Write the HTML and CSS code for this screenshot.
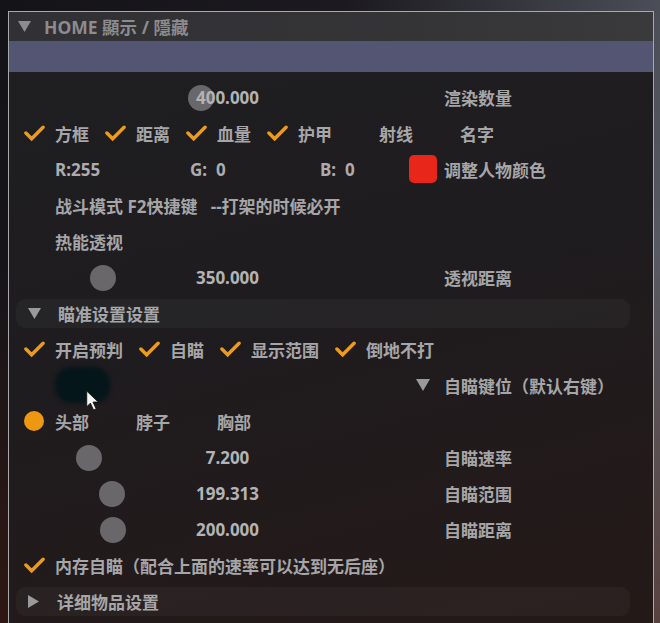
FILE: index.html
```html
<!DOCTYPE html>
<html lang="zh-CN">
<head>
    <meta charset="UTF-8">
    <meta name="viewport" content="width=device-width, initial-scale=1.0">
    <title>HOME 顯示 / 隱藏</title>
    <link rel="stylesheet" href="styles.css">
</head>
<body>
    <div class="panel">
        <div class="titlebar">
            <svg class="tri tri-title" viewBox="0 0 12 10"><polygon points="0,0 12,0 6,10"/></svg>
            <span>HOME 顯示 / 隱藏</span>
        </div>
        <div class="accent"></div>

        <div class="content">
            <div class="row slider-row">
                <div class="slider"><span class="knob" style="left: 133px"></span><span class="value">400.000</span></div>
                <span class="label">渲染数量</span>
            </div>

            <div class="row options">
                <div class="opt"><svg class="check" viewBox="0 0 22 18"><polyline points="2,9 8,15 20,3"/></svg><span>方框</span></div>
                <div class="opt"><svg class="check" viewBox="0 0 22 18"><polyline points="2,9 8,15 20,3"/></svg><span>距离</span></div>
                <div class="opt"><svg class="check" viewBox="0 0 22 18"><polyline points="2,9 8,15 20,3"/></svg><span>血量</span></div>
                <div class="opt"><svg class="check" viewBox="0 0 22 18"><polyline points="2,9 8,15 20,3"/></svg><span>护甲</span></div>
                <div class="opt"><i class="slot"></i><span>射线</span></div>
                <div class="opt"><i class="slot"></i><span>名字</span></div>
            </div>

            <div class="row rgb">
                <span class="num">R:255</span>
                <span class="num">G:&nbsp; 0</span>
                <span class="num">B:&nbsp; 0</span>
                <span class="swatch"></span>
                <span class="label">调整人物颜色</span>
            </div>

            <div class="row text-row">战斗模式 F2快捷键&nbsp;&nbsp; --打架的时候必开</div>
            <div class="row text-row">热能透视</div>

            <div class="row slider-row">
                <div class="slider"><span class="knob" style="left: 35px"></span><span class="value">350.000</span></div>
                <span class="label">透视距离</span>
            </div>

            <div class="row section">
                <div class="section-bar">
                    <svg class="tri" viewBox="0 0 12 10"><polygon points="0,0 12,0 6,10"/></svg>
                    <span>瞄准设置设置</span>
                </div>
            </div>

            <div class="row options">
                <div class="opt"><svg class="check" viewBox="0 0 22 18"><polyline points="2,9 8,15 20,3"/></svg><span>开启预判</span></div>
                <div class="opt"><svg class="check" viewBox="0 0 22 18"><polyline points="2,9 8,15 20,3"/></svg><span>自瞄</span></div>
                <div class="opt"><svg class="check" viewBox="0 0 22 18"><polyline points="2,9 8,15 20,3"/></svg><span>显示范围</span></div>
                <div class="opt"><svg class="check" viewBox="0 0 22 18"><polyline points="2,9 8,15 20,3"/></svg><span>倒地不打</span></div>
            </div>

            <div class="row key-row">
                <div class="key-color"><span class="blob"></span></div>
                <svg class="tri tri-key" viewBox="0 0 14 12"><polygon points="0,0 14,0 7,12"/></svg>
                <span class="label">自瞄键位（默认右键）</span>
                <svg class="cursor" viewBox="0 0 13 20"><path d="M1 1 L1 16 L4.5 12.5 L7.5 19 L10 18 L7 11.5 L12 11.5 Z"/></svg>
            </div>

            <div class="row options">
                <div class="opt"><i class="radio"></i><span>头部</span></div>
                <div class="opt"><i class="slot"></i><span>脖子</span></div>
                <div class="opt"><i class="slot"></i><span>胸部</span></div>
            </div>

            <div class="row slider-row">
                <div class="slider"><span class="knob" style="left: 21px"></span><span class="value">7.200</span></div>
                <span class="label">自瞄速率</span>
            </div>
            <div class="row slider-row">
                <div class="slider"><span class="knob" style="left: 44px"></span><span class="value">199.313</span></div>
                <span class="label">自瞄范围</span>
            </div>
            <div class="row slider-row">
                <div class="slider"><span class="knob" style="left: 45px"></span><span class="value">200.000</span></div>
                <span class="label">自瞄距离</span>
            </div>

            <div class="row options">
                <div class="opt"><svg class="check" viewBox="0 0 22 18"><polyline points="2,9 8,15 20,3"/></svg><span>内存自瞄（配合上面的速率可以达到无后座）</span></div>
            </div>

            <div class="row section">
                <div class="section-bar">
                    <svg class="tri tri-right" viewBox="0 0 11 13"><polygon points="0,0 11,6.5 0,13"/></svg>
                    <span>详细物品设置</span>
                </div>
            </div>
        </div>
    </div>
</body>
</html>
```

FILE: styles.css
```css
html, body {
    height: 100%;
}
body {
    margin: 0;
    overflow: hidden;
    font-family: "Noto Sans", "Noto Sans CJK SC", sans-serif;
    font-weight: 700;
    font-size: 17px;
    color: #a6a6a8;
    background:
        linear-gradient(180deg, rgba(0, 0, 0, 0) 40%, rgba(70, 25, 10, 0.5) 100%),
        linear-gradient(100deg, #141318 0%, #1c1a20 45%, #4a4d56 85%, #6a6c74 100%);
}
.panel {
    margin: 11px 0 0 8px;
    width: 644px;
    height: 620px;
    border: 1px solid #a9a9ad;
    border-bottom: none;
    overflow: hidden;
    background: linear-gradient(165deg, #1f1e21 0%, #1e1c1f 45%, #221a1b 75%, #241917 100%);
}
.titlebar {
    height: 29px;
    display: flex;
    align-items: center;
    gap: 13px;
    padding-left: 9px;
    background: linear-gradient(90deg, #313034 0%, #343336 60%, #3a3a3d 100%);
    color: #8c8c8e;
    font-size: 17.5px;
}
.accent {
    height: 31px;
    background: #545573;
}
.content {
    padding: 7px 0 0 7px;
}
.row {
    position: relative;
    height: 36px;
    display: flex;
    align-items: center;
    padding-left: 8px;
}
.tri {
    fill: #9a9a9c;
    width: 13px;
    height: 11px;
    flex: none;
}
.tri-title {
    fill: #8c8c8e;
}

/* sliders */
.slider-row {
    padding-left: 39px;
}
.slider {
    position: relative;
    width: 345px;
    height: 36px;
    display: flex;
    align-items: center;
    justify-content: center;
}
.knob {
    position: absolute;
    top: 6px;
    width: 26px;
    height: 26px;
    border-radius: 50%;
    background: #69676a;
}
.value {
    position: relative;
    color: #b3b3b5;
}
.label {
    margin-left: 44px;
}

/* checkbox / radio rows */
.options {
    gap: 16px;
}
.opt {
    display: flex;
    align-items: center;
    gap: 10px;
}
.check {
    width: 21px;
    height: 18px;
    flex: none;
}
.check polyline {
    fill: none;
    stroke: #ec9b1f;
    stroke-width: 3.6;
    stroke-linecap: round;
    stroke-linejoin: miter;
}
.slot {
    width: 21px;
    height: 20px;
    flex: none;
}
.radio {
    width: 20px;
    height: 20px;
    margin-right: 1px;
    border-radius: 50%;
    background: #ee9812;
    flex: none;
}

/* colour row */
.rgb {
    padding-left: 39px;
}
.rgb .num {
    color: #acacae;
}
.rgb .num:nth-child(1) { width: 135px; }
.rgb .num:nth-child(2) { width: 130px; }
.rgb .num:nth-child(3) { width: 89px; }
.swatch {
    width: 28px;
    height: 28px;
    border-radius: 5px;
    background: #e8261a;
    flex: none;
}
.rgb .label {
    margin-left: 7px;
}

.text-row {
    padding-left: 39px;
}

/* collapsible headers */
.section {
    padding-left: 0;
}
.section-bar {
    width: 614px;
    height: 29px;
    display: flex;
    align-items: center;
    gap: 17px;
    padding-left: 12px;
    box-sizing: border-box;
    border-radius: 9px;
    background: rgba(255, 255, 255, 0.035);
}
.tri-right {
    width: 11px;
    height: 13px;
    margin-right: 1px;
}

/* aim key row */
.key-row {
    padding-left: 39px;
}
.key-color {
    width: 345px;
    height: 36px;
    display: flex;
    align-items: center;
}
.blob {
    width: 55px;
    height: 36px;
    border-radius: 16px;
    background: #04161a;
    filter: blur(2px);
}
.tri-key {
    width: 14px;
    height: 12px;
    margin-left: 16px;
}
.key-row .label {
    margin-left: 14px;
}
.cursor {
    position: absolute;
    left: 69px;
    top: 23px;
    width: 15px;
    height: 21px;
    fill: #f4f4f4;
    stroke: #111;
    stroke-width: 0.8;
}
```
